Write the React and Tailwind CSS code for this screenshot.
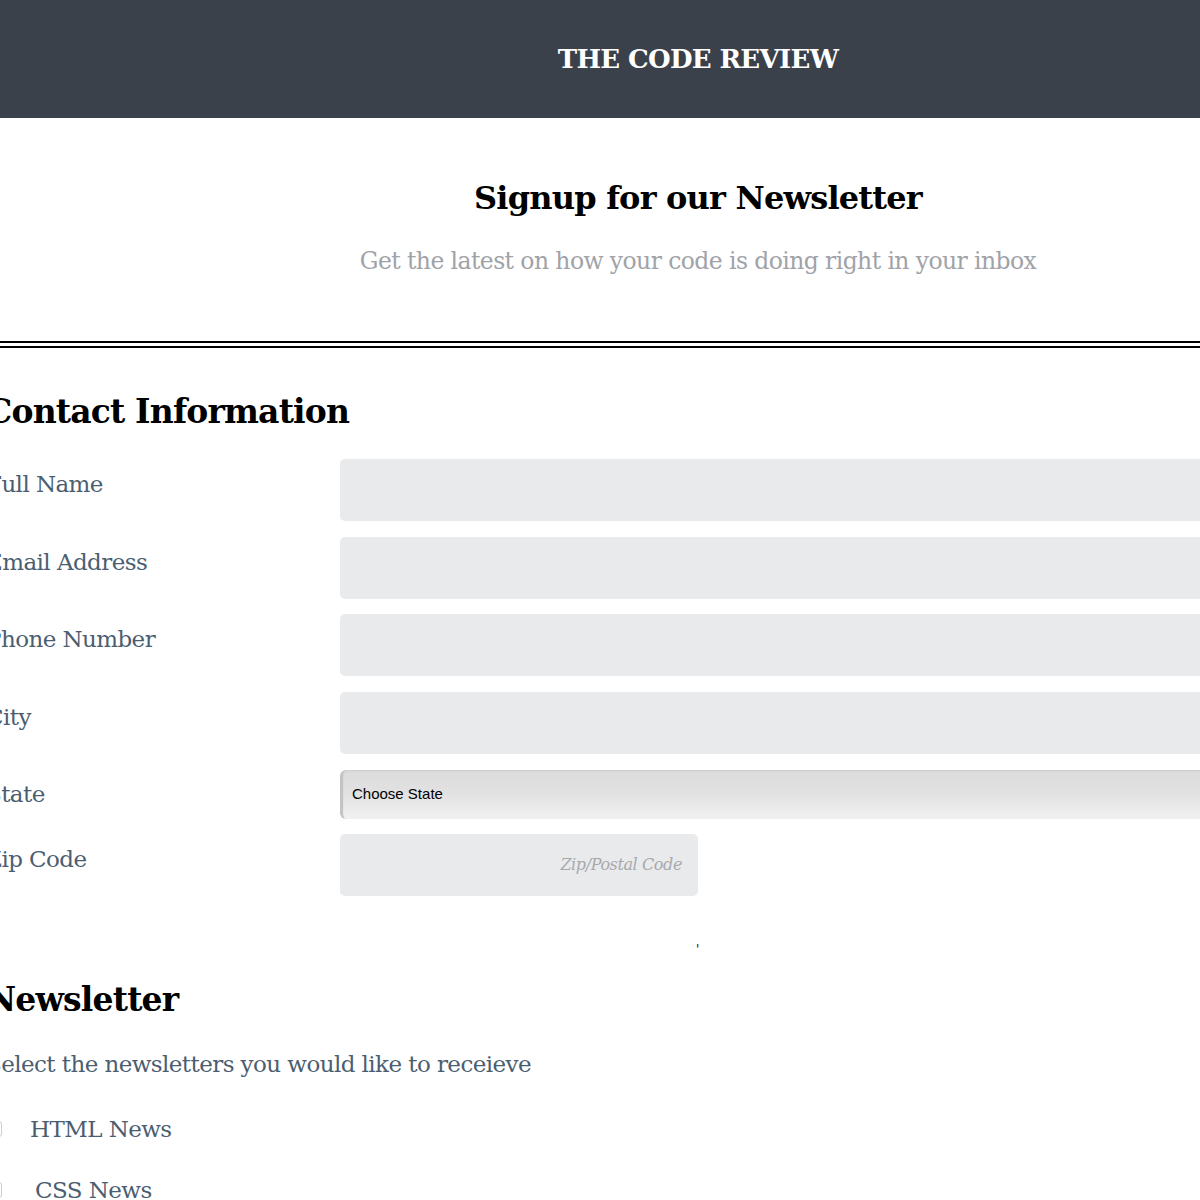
import React from 'react';

const serif = { fontFamily: '"DejaVu Serif", "Liberation Serif", serif' };

const fields = [
    { label: 'Full Name' },
    { label: 'Email Address' },
    { label: 'Phone Number' },
    { label: 'City' },
];

const Field = ({ label }) => (
    <div className="flex items-start">
        <label className="w-[354px] shrink-0 pt-[8px] text-[23px] text-[#4b5e71] tracking-tight">{label}</label>
        <div className="h-[62px] w-[1060px] rounded-[5px] bg-[#e9eaec]" />
    </div>
);

export default function App() {
    return (
        <div className="w-[1200px] h-[1200px] overflow-hidden bg-white" style={serif}>
            <div className="w-[1396px]">
                <header className="h-[118px] bg-[#3a414b] flex items-center justify-center">
                    <h1 className="text-[26px] font-bold text-white tracking-tight">THE CODE REVIEW</h1>
                </header>

                <section className="pt-[56px] pb-[62px] text-center">
                    <h2 className="text-[32px] font-bold text-black tracking-tight">Signup for our Newsletter</h2>
                    <p className="mt-[22px] text-[23.5px] text-[#9fa3a8] tracking-tight">Get the latest on how your code is doing right in your inbox</p>
                </section>

                <div className="border-t-[7px] border-double border-black" />

                <form className="-ml-[14px] pt-[47px]">
                    <h3 className="text-[33px] font-bold text-black tracking-tight leading-none">Contact Information</h3>

                    <div className="mt-[31px] flex flex-col gap-[15.6px]">
                        {fields.map(f => <Field key={f.label} label={f.label} />)}

                        <div className="flex items-center">
                            <label className="w-[354px] shrink-0 text-[23px] text-[#4b5e71] tracking-tight">State</label>
                            <div
                                className="h-[49px] w-[1060px] flex items-center rounded-l-[6px] border-l-[3px] border-[#c4c4c6] pl-[9px] bg-gradient-to-b from-[#dcdcdd] via-[#e2e2e3] to-[#f1f1f2] shadow-[inset_0_1px_2px_rgba(0,0,0,0.08)]"
                                style={{ fontFamily: '"Liberation Sans", Arial, sans-serif' }}
                            >
                                <span className="text-[15px] text-black">Choose State</span>
                            </div>
                        </div>

                        <div className="flex items-start">
                            <label className="w-[354px] shrink-0 pt-[8px] text-[23px] text-[#4b5e71] tracking-tight">Zip Code</label>
                            <div className="h-[62px] w-[358px] rounded-[5px] bg-[#e9eaec] flex items-center justify-end pr-[16px]">
                                <span className="text-[16px] italic text-[#a7a9ad] tracking-tight">Zip/Postal Code</span>
                            </div>
                        </div>
                    </div>

                    <div className="h-[87px] relative">
                        <span className="absolute left-[710px] top-[48px] text-[12px] text-black leading-none">'</span>
                    </div>

                    <h3 className="text-[33px] font-bold text-black tracking-tight leading-none">Newsletter</h3>
                    <p className="mt-[31px] text-[23px] text-[#4b5e71] tracking-tight">Select the newsletters you would like to receieve</p>

                    <div className="mt-[30px] flex flex-col gap-[27px]">
                        <label className="flex items-center gap-[28px] text-[23px] text-[#4b5e71] tracking-tight">
                            <span className="w-[16px] h-[16px] rounded-[3px] border border-[#c9ccd0] bg-white" />
                            HTML News
                        </label>
                        <label className="flex items-center gap-[33px] text-[23px] text-[#4b5e71] tracking-tight">
                            <span className="w-[16px] h-[16px] rounded-[3px] border border-[#c9ccd0] bg-white" />
                            CSS News
                        </label>
                    </div>
                </form>
            </div>
        </div>
    );
}
